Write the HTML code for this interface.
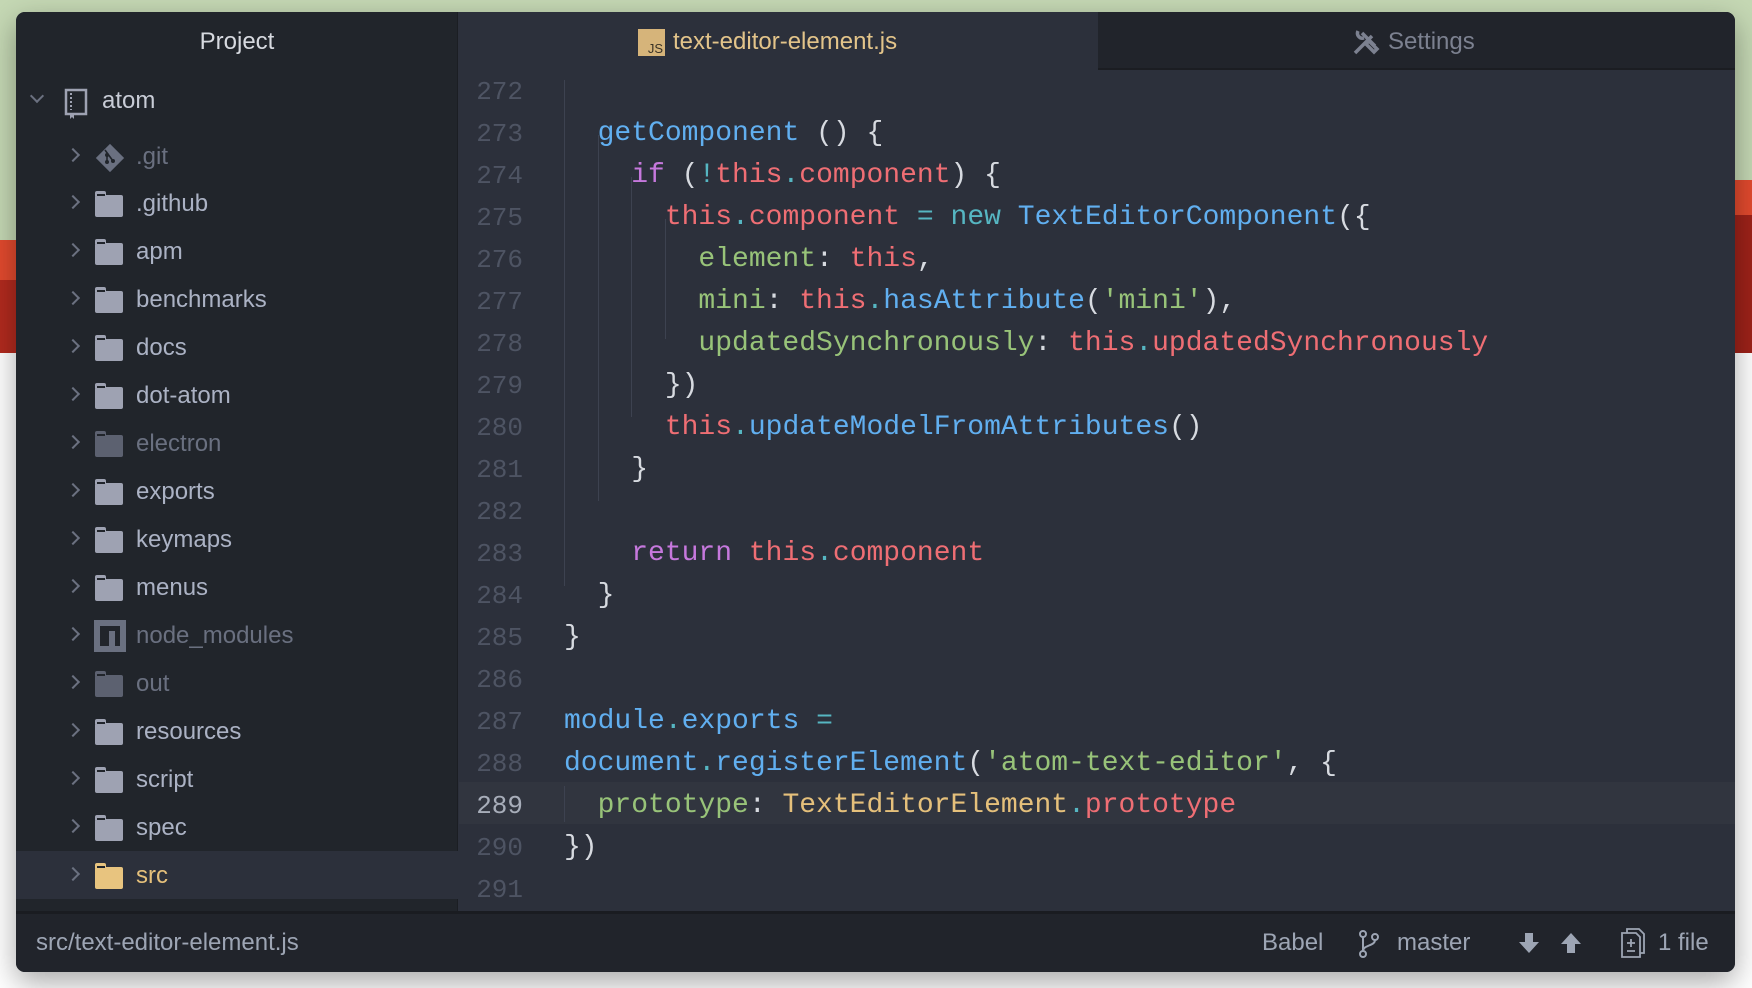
<!DOCTYPE html>
<html><head><meta charset="utf-8"><style>
*{margin:0;padding:0;box-sizing:border-box}
body{width:1752px;height:988px;position:relative;overflow:hidden;background:#fff;font-family:"Liberation Sans",sans-serif}
.abs{position:absolute}
#win{position:absolute;left:16px;top:12px;width:1719px;height:960px;border-radius:9px;overflow:hidden;background:#2c303b;box-shadow:0 10px 30px rgba(0,0,0,.35)}
#side{position:absolute;left:0;top:0;width:442px;height:899px;background:#21252b;border-right:1px solid #1b1e23}
#tabs{position:absolute;left:443px;top:0;right:0;height:58px;background:#2c303b}
#status{position:absolute;left:0;top:899px;right:0;height:61px;background:#21242b;border-top:3px solid #1a1c21;color:#9da5b4;font-size:24px}
.row{position:absolute;left:0;width:442px;height:48px;color:#abb2c4;font-size:24px;line-height:48px}
.row .t{position:absolute;left:120px}
.chev{position:absolute;left:52px;top:17px;width:10px;height:10px;border-right:2px solid #6b7180;border-top:2px solid #6b7180;transform:rotate(45deg)}
.fold{position:absolute;left:79px;top:15px;width:28px;height:22px;background:#9ea2b2;border-radius:2px}
.fold:before{content:"";position:absolute;left:0;top:-4px;width:11px;height:5px;background:inherit;border-radius:2px 2px 0 0}
.fold:after{content:"";position:absolute;left:2px;top:-1px;width:8px;height:2px;background:#21252b}
.dim{color:#6a7080}.dim .fold{background:#5c6170}
.code{position:absolute;left:0;font-family:"Liberation Mono",monospace;font-size:28px;line-height:42px;white-space:pre;color:#d7dae0}
.ln{position:absolute;left:443px;width:64px;text-align:right;font-family:"Liberation Mono",monospace;font-size:26px;line-height:42px;color:#4e5463}
.b{color:#61aff0}.p{color:#c678dd}.r{color:#ef6e74}.c{color:#56b6c2}.g{color:#98c379}.y{color:#e5c07b}.w{color:#d7dae0}
.guide{position:absolute;width:1px;background:#3d4250}
</style></head><body>
<div class="abs" style="left:0;top:0;width:1752px;height:353px;background:#c5d8b4"></div>
<div class="abs" style="left:0;top:240px;width:30px;height:113px;background:#e24a2e"></div>
<div class="abs" style="left:0;top:280px;width:30px;height:73px;background:#b22a1e"></div>
<div class="abs" style="left:1720px;top:180px;width:32px;height:173px;background:#e24a2e"></div>
<div class="abs" style="left:1720px;top:215px;width:32px;height:138px;background:#9e2219"></div>
<div id="win">
<div id="side">
 <div class="abs" style="left:0;top:0;width:442px;height:58px;line-height:60px;text-align:center;color:#d7dae0;font-size:24px">Project</div>
 <div class="row" style="top:65px"><div class="chev" style="left:16px;top:14px;transform:rotate(135deg)"></div>
  <svg class="abs" style="left:48px;top:11px" width="24" height="32" viewBox="0 0 24 32"><rect x="2" y="2" width="20" height="24" fill="none" stroke="#9ea2b2" stroke-width="2.5"/><line x1="7" y1="5" x2="7" y2="22" stroke="#9ea2b2" stroke-width="2" stroke-dasharray="2 2"/><path d="M6 26v5l2-2 2 2v-5z" fill="#9ea2b2"/></svg>
  <span class="t" style="left:86px;color:#c8ccd6">atom</span></div>
 <div class="row dim" style="top:121px"><div class="chev"></div>
  <svg class="abs" style="left:78px;top:9px" width="32" height="32" viewBox="0 0 32 32"><rect x="6" y="6" width="20" height="20" fill="#6a7080" transform="rotate(45 16 16)"/><circle cx="13" cy="13" r="2" fill="#21252b"/><circle cx="19" cy="19" r="2" fill="#21252b"/><circle cx="13" cy="20" r="2" fill="#21252b"/><path d="M11 8l8 11M13 13v7" stroke="#21252b" stroke-width="1.6"/></svg>
  <span class="t">.git</span></div>
 <div class="row" style="top:168px"><div class="chev"></div><div class="fold"></div><span class="t">.github</span></div>
 <div class="row" style="top:216px"><div class="chev"></div><div class="fold"></div><span class="t">apm</span></div>
 <div class="row" style="top:264px"><div class="chev"></div><div class="fold"></div><span class="t">benchmarks</span></div>
 <div class="row" style="top:312px"><div class="chev"></div><div class="fold"></div><span class="t">docs</span></div>
 <div class="row" style="top:360px"><div class="chev"></div><div class="fold"></div><span class="t">dot-atom</span></div>
 <div class="row dim" style="top:408px"><div class="chev"></div><div class="fold"></div><span class="t">electron</span></div>
 <div class="row" style="top:456px"><div class="chev"></div><div class="fold"></div><span class="t">exports</span></div>
 <div class="row" style="top:504px"><div class="chev"></div><div class="fold"></div><span class="t">keymaps</span></div>
 <div class="row" style="top:552px"><div class="chev"></div><div class="fold"></div><span class="t">menus</span></div>
 <div class="row dim" style="top:600px"><div class="chev"></div>
  <div class="abs" style="left:78px;top:8px;width:32px;height:32px;background:#6a7080"><div class="abs" style="left:6px;top:6px;width:20px;height:20px;background:#21252b"></div><div class="abs" style="left:15px;top:11px;width:6px;height:15px;background:#6a7080"></div></div>
  <span class="t">node_modules</span></div>
 <div class="row dim" style="top:648px"><div class="chev"></div><div class="fold"></div><span class="t">out</span></div>
 <div class="row" style="top:696px"><div class="chev"></div><div class="fold"></div><span class="t">resources</span></div>
 <div class="row" style="top:744px"><div class="chev"></div><div class="fold"></div><span class="t">script</span></div>
 <div class="row" style="top:792px"><div class="chev"></div><div class="fold"></div><span class="t">spec</span></div>
 <div class="row" style="top:839px;background:#2c303b;color:#e5c07b;line-height:50px"><div class="chev" style="top:18px"></div><div class="fold" style="background:#e8c47f;top:16px"></div><span class="t">src</span></div>
</div>
<div id="tabs">
 <div class="abs" style="left:179px;top:17px;width:27px;height:27px;background:#d6b47a"><span class="abs" style="right:2px;bottom:0;font-size:13px;color:#3a3326">JS</span></div>
 <div class="abs" style="left:214px;top:0;line-height:60px;font-size:24px;color:#e3c48a">text-editor-element.js</div>
 <div class="abs" style="left:639px;top:0;width:700px;height:58px;background:#21242b;border-bottom:2px solid #1b1d22"></div>
 <svg class="abs" style="left:893px;top:16px" width="28" height="28" viewBox="0 0 28 28"><path d="M3 25L20 8M10 5l13 13M6 3a5 5 0 0 0 6 7M22 24l3-3-8-8-3 3z" stroke="#7c8190" stroke-width="3.5" fill="none"/></svg>
 <div class="abs" style="left:929px;top:0;line-height:60px;font-size:24px;color:#7c8190">Settings</div>
</div>
<div class="abs" style="left:443px;top:770px;width:1276px;height:42px;background:#31353f"></div>
<div class="guide" style="left:548px;top:68px;height:506px"></div>
<div class="guide" style="left:582px;top:123px;height:366px"></div>
<div class="guide" style="left:615px;top:165px;height:240px"></div>
<div class="guide" style="left:649px;top:207px;height:120px"></div>
<div class="guide" style="left:548px;top:774px;height:36px"></div>
<div class="ln" style="top:59px">272<br>273<br>274<br>275<br>276<br>277<br>278<br>279<br>280<br>281<br>282<br>283<br>284<br>285<br>286<br>287<br>288<br><span style="color:#a7adb9">289</span><br>290<br>291</div>
<div class="code" style="left:548px;top:59px">
  <span class="b">getComponent</span> () {
    <span class="p">if</span> (<span class="c">!</span><span class="r">this</span><span class="c">.</span><span class="r">component</span>) {
      <span class="r">this</span><span class="c">.</span><span class="r">component</span> <span class="c">=</span> <span class="c">new</span> <span class="b">TextEditorComponent</span>({
        <span class="g">element</span>: <span class="r">this</span>,
        <span class="g">mini</span>: <span class="r">this</span><span class="c">.</span><span class="b">hasAttribute</span>(<span class="g">'mini'</span>),
        <span class="g">updatedSynchronously</span>: <span class="r">this</span><span class="c">.</span><span class="r">updatedSynchronously</span>
      })
      <span class="r">this</span><span class="c">.</span><span class="b">updateModelFromAttributes</span>()
    }

    <span class="p">return</span> <span class="r">this</span><span class="c">.</span><span class="r">component</span>
  }
}

<span class="b">module</span><span class="c">.</span><span class="b">exports</span> <span class="c">=</span>
<span class="b">document</span><span class="c">.</span><span class="b">registerElement</span>(<span class="g">'atom-text-editor'</span>, {
  <span class="g">prototype</span>: <span class="y">TextEditorElement</span><span class="c">.</span><span class="r">prototype</span>
})
</div>
<div id="status">
 <div class="abs" style="left:20px;top:0;line-height:58px">src/text-editor-element.js</div>
 <div class="abs" style="left:1246px;top:0;line-height:58px">Babel</div>
 <svg class="abs" style="left:1342px;top:15px" width="22" height="30" viewBox="0 0 22 30"><circle cx="5" cy="5" r="3" fill="none" stroke="#9da5b4" stroke-width="2"/><circle cx="5" cy="25" r="3" fill="none" stroke="#9da5b4" stroke-width="2"/><circle cx="17" cy="8" r="3" fill="none" stroke="#9da5b4" stroke-width="2"/><path d="M5 8v14M17 11c0 6-12 5-12 11" fill="none" stroke="#9da5b4" stroke-width="2"/></svg>
 <div class="abs" style="left:1381px;top:0;line-height:58px">master</div>
 <svg class="abs" style="left:1502px;top:18px" width="22" height="22" viewBox="0 0 22 22"><path d="M7 1h8v9h6l-10 11L1 10h6z" fill="#9da5b4"/></svg>
 <svg class="abs" style="left:1544px;top:18px" width="22" height="22" viewBox="0 0 22 22"><path d="M7 21h8v-9h6L11 1 1 12h6z" fill="#9da5b4"/></svg>
 <svg class="abs" style="left:1604px;top:13px" width="26" height="32" viewBox="0 0 26 32"><path d="M2 6h14l4 4v20H2zM7 6V2h12l5 5v19h-4" fill="none" stroke="#9da5b4" stroke-width="1.8"/><path d="M11 12v8M7 16h8M7 24h8" stroke="#9da5b4" stroke-width="1.8"/></svg>
 <div class="abs" style="left:1642px;top:0;line-height:58px">1 file</div>
</div>
</div>
</body></html>
